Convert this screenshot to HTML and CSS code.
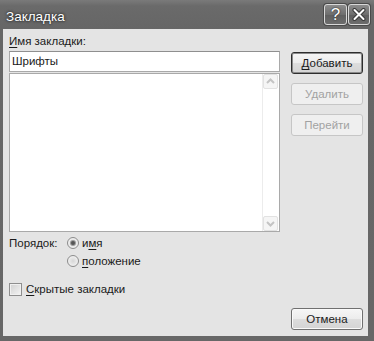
FILE: index.html
```html
<!DOCTYPE html>
<html lang="ru">
<head>
<meta charset="utf-8">
<title>Закладка</title>
<link rel="stylesheet" href="styles.css">
</head>
<body>
<div class="window">
  <div class="titlebar">
    <span class="title">Закладка</span>
    <div class="tb-buttons">
      <div class="tb-btn help">?</div>
      <div class="tb-btn close">
        <svg width="14" height="13" viewBox="0 0 14 13">
          <path d="M2.5 2 L11.5 11 M11.5 2 L2.5 11" stroke="#3a3a3a" stroke-width="4" stroke-linecap="round"/>
          <path d="M2.5 2 L11.5 11 M11.5 2 L2.5 11" stroke="#ffffff" stroke-width="2" stroke-linecap="round"/>
        </svg>
      </div>
    </div>
  </div>
  <div class="client">
    <div class="main">
      <div class="left">
        <div class="lbl"><u>И</u>мя закладки:</div>
        <div class="input">Шрифты</div>
        <div class="list">
          <div class="list-body"></div>
          <div class="scrollbar">
            <div class="sb-btn">
              <svg width="13" height="13" viewBox="0 0 13 13"><path d="M3 8 L6.5 4.5 L10 8" fill="none" stroke="#c4c4c4" stroke-width="2"/></svg>
            </div>
            <div class="sb-track"></div>
            <div class="sb-btn">
              <svg width="13" height="13" viewBox="0 0 13 13"><path d="M3 5 L6.5 8.5 L10 5" fill="none" stroke="#c4c4c4" stroke-width="2"/></svg>
            </div>
          </div>
        </div>
        <div class="order">
          <div class="order-label">Порядок:</div>
          <div class="radios">
            <div class="opt"><span class="radio checked"></span><span>и<u>м</u>я</span></div>
            <div class="opt"><span class="radio"></span><span><u>п</u>оложение</span></div>
          </div>
        </div>
        <div class="opt check-row"><span class="checkbox"></span><span><u>С</u>крытые закладки</span></div>
      </div>
      <div class="right">
        <div class="btn default"><span><u>Д</u>обавить</span></div>
        <div class="btn disabled">Удалить</div>
        <div class="btn disabled">Перейти</div>
      </div>
    </div>
    <div class="footer">
      <div class="btn">Отмена</div>
    </div>
  </div>
</div>
</body>
</html>
```

FILE: styles.css
```css
html, body {
  margin: 0;
  padding: 0;
  background: #6a6a6a;
}
body {
  font-family: "Liberation Sans", Arial, sans-serif;
  font-size: 11.5px;
  color: #1a1a1a;
}
u {
  text-decoration: underline;
  text-underline-offset: 2px;
}
.window {
  width: 374px;
  height: 341px;
  box-sizing: border-box;
  background: linear-gradient(#7a7a7a 0, #6a6a6a 6px, #666666 29px, #676767 100%);
  padding: 0 6px 5px 3px;
  display: flex;
  flex-direction: column;
}
.titlebar {
  height: 29px;
  display: flex;
  justify-content: space-between;
  align-items: flex-start;
  flex: none;
}
.title {
  margin-top: 9px;
  margin-left: 3px;
  font-size: 13.5px;
  line-height: 15px;
  color: #ffffff;
  text-shadow: 0 0 3px #2a2a2a, 0 0 2px #2a2a2a;
}
.tb-buttons {
  display: flex;
  gap: 1px;
  margin-top: 4px;
  margin-right: -2px;
}
.tb-btn {
  height: 21px;
  box-sizing: border-box;
  border: 1px solid #d8d8d8;
  border-radius: 3px;
  background: linear-gradient(#8c8c8c, #6e6e6e 50%, #5f5f5f 51%, #6c6c6c);
  box-shadow: 0 0 0 1px #4a4a4a;
  display: flex;
  align-items: center;
  justify-content: center;
}
.tb-btn.help {
  width: 23px;
  color: #ffffff;
  font-size: 17px;
  line-height: 19px;
  text-shadow: 0 0 2px #333, 0 0 1px #333;
}
.tb-btn.close {
  width: 22px;
}
.client {
  flex: 1;
  background: #e4e4e4;
  display: flex;
  flex-direction: column;
  padding: 5px 5px 6px 6px;
}
.main {
  display: flex;
  gap: 11px;
}
.left {
  width: 271px;
  display: flex;
  flex-direction: column;
}
.lbl {
  line-height: 15px;
}
.input {
  margin-top: 2px;
  height: 21px;
  box-sizing: border-box;
  border: 1px solid #a9a9a9;
  border-top-color: #8f8f8f;
  background: #ffffff;
  padding-left: 2px;
  line-height: 19px;
}
.list {
  margin-top: 1px;
  height: 159px;
  box-sizing: border-box;
  border: 1px solid #a9a9a9;
  background: #ffffff;
  display: flex;
}
.list-body {
  flex: 1;
}
.scrollbar {
  width: 16px;
  border-left: 1px solid #ececec;
  display: flex;
  flex-direction: column;
  align-items: flex-start;
}
.sb-btn {
  width: 15px;
  height: 15px;
  box-sizing: border-box;
  border: 1px solid #e2e2e2;
  border-radius: 2px;
  background: #f5f5f5;
  display: flex;
  align-items: center;
  justify-content: center;
}
.sb-track {
  flex: 1;
}
.order {
  margin-top: 2px;
  display: flex;
}
.order-label {
  width: 58px;
  line-height: 18px;
}
.radios {
  display: flex;
  flex-direction: column;
}
.opt {
  display: flex;
  align-items: center;
  gap: 3px;
  height: 18px;
  line-height: 18px;
}
.radio {
  width: 12px;
  height: 12px;
  box-sizing: border-box;
  border-radius: 50%;
  border: 1px solid #8c8c8c;
  background: radial-gradient(circle at 50% 50%, #d6d6d6 0, #ececec 60%, #f6f6f6 100%);
  display: flex;
  align-items: center;
  justify-content: center;
}
.radio.checked::after {
  content: "";
  width: 4px;
  height: 4px;
  border-radius: 50%;
  background: #555555;
  box-shadow: 0 0 0 1px #9a9a9a;
}
.check-row {
  margin-top: 10px;
  gap: 4px;
}
.checkbox {
  width: 13px;
  height: 13px;
  box-sizing: border-box;
  border: 1px solid #8e8e8e;
  background: linear-gradient(135deg, #d0d0d0, #f4f4f4);
  box-shadow: inset 0 0 0 1px #f0f0f0;
}
.right {
  width: 72px;
  padding-top: 18px;
  display: flex;
  flex-direction: column;
  gap: 9px;
}
.btn {
  width: 72px;
  height: 22px;
  box-sizing: border-box;
  border: 1px solid #707070;
  border-radius: 3px;
  background: linear-gradient(#f6f6f6 0, #ececec 50%, #dddddd 51%, #d4d4d4 100%);
  box-shadow: inset 0 0 0 1px #fafafa;
  display: flex;
  align-items: center;
  justify-content: center;
  line-height: 20px;
}
.btn.default {
  border-color: #2e2e2e;
  box-shadow: inset 0 0 0 1px #8a8a8a;
}
.btn.disabled {
  border-color: #c6c6c6;
  background: #efefef;
  box-shadow: none;
  color: #a2a2a2;
}
.footer {
  margin-top: auto;
  display: flex;
  justify-content: flex-end;
}
```
